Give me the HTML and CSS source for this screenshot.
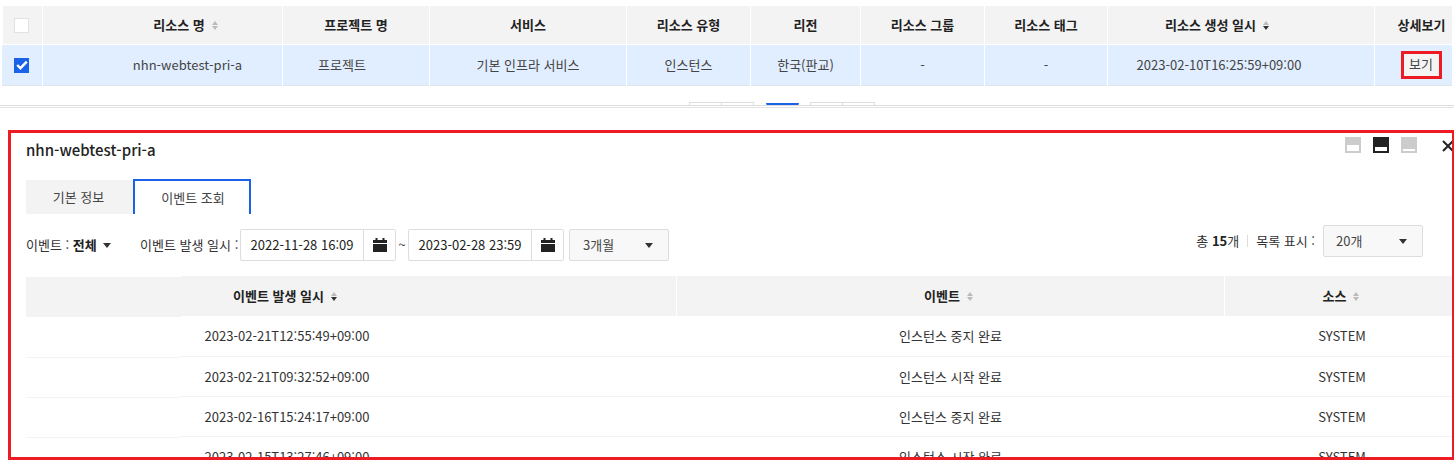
FILE: index.html
```html
<!DOCTYPE html>
<html lang="ko">
<head>
<meta charset="utf-8">
<title>리소스</title>
<link rel="stylesheet" href="styles.css">
</head>
<body>
<section class="resources">
  <div class="res-row res-head">
    <div class="cell check-cell"><span class="check"></span></div>
    <div class="cell shift-name">리소스 명<span class="sort"><i class="up"></i><i class="down"></i></span></div>
    <div class="cell">프로젝트 명</div>
    <div class="cell">서비스</div>
    <div class="cell">리소스 유형</div>
    <div class="cell">리전</div>
    <div class="cell">리소스 그룹</div>
    <div class="cell">리소스 태그</div>
    <div class="cell shift-date">리소스 생성 일시<span class="sort active"><i class="up"></i><i class="down"></i></span></div>
    <div class="cell shift-detail">상세보기</div>
  </div>
  <div class="res-row res-body">
    <div class="cell check-cell"><span class="check on"><svg width="12" height="10" viewBox="0 0 12 10"><path d="M1.2 5 4.4 8.2 10.8 1.6" fill="none" stroke="#fff" stroke-width="2.4"/></svg></span></div>
    <div class="cell shift-name">nhn-webtest-pri-a</div>
    <div class="cell shift-project">프로젝트</div>
    <div class="cell">기본 인프라 서비스</div>
    <div class="cell">인스턴스</div>
    <div class="cell">한국(판교)</div>
    <div class="cell">-</div>
    <div class="cell">-</div>
    <div class="cell shift-date">2023-02-10T16:25:59+09:00</div>
    <div class="cell shift-detail"><button class="view">보기</button></div>
  </div>
</section>

<div class="pager">
  <span class="page"></span><span class="page"></span>
  <span class="page current"></span>
  <span class="page"></span><span class="page"></span>
</div>
<div class="divider"></div>

<section class="panel">
  <header class="panel-head">
    <h1 class="panel-title">nhn-webtest-pri-a</h1>
    <div class="panel-tools">
      <svg width="16" height="16" viewBox="0 0 16 16"><rect width="16" height="16" fill="#ccc"/><rect x="2" y="8" width="12" height="6" fill="#fff"/></svg>
      <svg width="16" height="16" viewBox="0 0 16 16"><rect width="16" height="16" fill="#222"/><rect x="2" y="10" width="12" height="4" fill="#fff"/></svg>
      <svg width="16" height="16" viewBox="0 0 16 16"><rect width="16" height="16" fill="#ccc"/><rect x="2" y="12" width="12" height="2" fill="#fff"/></svg>
      <svg class="close" width="12" height="12" viewBox="0 0 12 12"><path d="M1 1 11 11M11 1 1 11" stroke="#222" stroke-width="2" fill="none"/></svg>
    </div>
  </header>

  <nav class="tabs">
    <span class="tab">기본 정보</span>
    <span class="tab selected">이벤트 조회</span>
  </nav>

  <div class="filters">
    <div class="filters-left">
      <span class="event-filter">이벤트 : <b>전체</b><i class="caret"></i></span>
      <span class="date-label">이벤트 발생 일시 :</span>
      <div class="date"><span class="date-text">2022-11-28 16:09</span><span class="date-btn"><svg width="14" height="14" viewBox="0 0 14 14"><path fill="#222" d="M0 2h2.500V0h2v2h5V0h2v2H14v3H0zM0 6h14v8H0z"/></svg></span></div>
      <span class="tilde">~</span>
      <div class="date"><span class="date-text">2023-02-28 23:59</span><span class="date-btn"><svg width="14" height="14" viewBox="0 0 14 14"><path fill="#222" d="M0 2h2.500V0h2v2h5V0h2v2H14v3H0zM0 6h14v8H0z"/></svg></span></div>
      <div class="select">3개월<i class="caret"></i></div>
    </div>
    <div class="filters-right">
      <span>총 <b>15</b>개</span>
      <span class="vr"></span>
      <span class="list-label">목록 표시 :</span>
      <div class="select">20개<i class="caret"></i></div>
    </div>
  </div>

  <div class="events">
    <div class="frozen">
      <div class="frozen-head"></div>
      <div class="frozen-row"></div>
      <div class="frozen-row"></div>
      <div class="frozen-row"></div>
      <div class="frozen-row"></div>
    </div>
    <div class="event-table">
      <div class="ev-row ev-head">
        <div class="cell ev-time">이벤트 발생 일시<span class="sort active"><i class="up"></i><i class="down"></i></span></div>
        <div class="cell ev-name">이벤트<span class="sort"><i class="up"></i><i class="down"></i></span></div>
        <div class="cell ev-source">소스<span class="sort"><i class="up"></i><i class="down"></i></span></div>
      </div>
      <div class="ev-row"><div class="cell ev-time">2023-02-21T12:55:49+09:00</div><div class="cell">인스턴스 중지 완료</div><div class="cell ev-source">SYSTEM</div></div>
      <div class="ev-row"><div class="cell ev-time">2023-02-21T09:32:52+09:00</div><div class="cell">인스턴스 시작 완료</div><div class="cell ev-source">SYSTEM</div></div>
      <div class="ev-row"><div class="cell ev-time">2023-02-16T15:24:17+09:00</div><div class="cell">인스턴스 중지 완료</div><div class="cell ev-source">SYSTEM</div></div>
      <div class="ev-row"><div class="cell ev-time">2023-02-15T13:27:46+09:00</div><div class="cell">인스턴스 시작 완료</div><div class="cell ev-source">SYSTEM</div></div>
    </div>
  </div>
</section>
</body>
</html>
```
FILE: styles.css
```css
* { box-sizing: border-box; }
html, body { margin: 0; height: 460px; overflow: hidden; background: #fff; }
body {
  font-family: "Noto Sans CJK KR", "Noto Sans", sans-serif;
  font-size: 13px;
  color: #333;
  line-height: 18px;
}
i { display: block; font-style: normal; }
b { font-weight: 700; color: #222; }

.resources { padding: 6px 0 0 3px; }
.res-row {
  display: grid;
  grid-template-columns: 39px 239px 146px 196px 123px 109px 123px 122px 266px 77px;
  column-gap: 1px;
}
.cell { display: flex; align-items: center; justify-content: center; min-width: 0; }
.res-head { height: 38px; margin-bottom: 1px; }
.res-head .cell { background: #f3f3f3; font-weight: 700; color: #222; }
.res-body { margin-left: -1px; grid-template-columns: 40px 239px 146px 196px 123px 109px 123px 122px 266px 77px; }
.res-body .cell { height: 41px; background: #e1eeff; border-bottom: 1px solid #dfe4ea; color: #444; }
.res-head .check-cell { padding-right: 2px; }
.res-body .check-cell { padding-right: 1px; }
.shift-name { padding-left: 50px; }
.res-head .shift-name { padding-left: 46px; }
.shift-project { padding-right: 28px; }
.shift-date { padding-right: 44px; }
.res-head .shift-date { padding-right: 48px; }
.shift-detail { padding-left: 16px; }

.check { display: block; width: 15px; height: 15px; background: #fff; border: 1px solid #e2e2e2; }
.check.on { background: #1a62e8; border-color: #1a62e8; display: flex; align-items: center; justify-content: center; }
.view {
  width: 41px; height: 28px; padding: 0 0 2px; margin-left: -1px;
  font: inherit; color: #444;
  background: #f4f4f4;
  border: 3px solid #ed1c24;
}

.sort { display: inline-flex; flex-direction: column; gap: 1px; margin-left: 7px; }
.up, .down { width: 0; height: 0; border-left: 3px solid transparent; border-right: 3px solid transparent; }
.up { border-bottom: 4px solid #bbb; }
.down { border-top: 4px solid #bbb; }
.sort.active .down { border-top-color: #333; }

.pager { display: flex; height: 21px; justify-content: center; padding: 16px 0 0 108px; overflow: hidden; }
.page { width: 33px; height: 10px; border: 1px solid #ddd; margin-right: -1px; flex: none; }
.page:nth-child(2) { margin-right: 12px; }
.page.current { border-color: #ddd; border-top: 3px solid #1a62e8; margin-right: 11px; margin-top: 1px; }
.divider { height: 3px; border-top: 1px solid #ddd; border-bottom: 1px solid #e4e4e4; margin-top: -2px; background: #fff; position: relative; }

.panel {
  margin: 22px 0 0 8px;
  height: 330px;
  border: 3px solid #ed1c24;
  border-right-width: 2px;
  padding-left: 15px;
  overflow: hidden;
}
.panel-head { display: flex; justify-content: space-between; height: 46px; padding-top: 4px; }
.panel-title { margin: 1px 0 0; font-size: 15px; line-height: 24px; font-weight: 500; color: #222; }
.panel-tools { display: flex; gap: 12px; height: 16px; }
.close { margin: 3px -2px 0 13px; flex: none; }

.tabs { display: flex; height: 35px; align-items: flex-end; }
.tab { width: 107px; height: 34px; padding-right: 2px; background: #f3f3f3; display: flex; align-items: center; justify-content: center; color: #444; }
.tab.selected { width: 118px; height: 35px; padding: 0 0 0 2px; background: #fff; border: 2px solid #1a62e8; border-bottom: 0; }

.filters { display: flex; justify-content: space-between; margin-top: 11px; height: 51px; }
.filters-left { display: flex; align-items: center; height: 32px; margin-top: 4px; }
.filters-right { display: flex; align-items: center; height: 32px; margin-right: 29px; }
.filters-right .select { padding-left: 12px; }
.event-filter { display: flex; align-items: center; white-space: pre; width: 114px; }
.event-filter .caret { margin-left: 6px; }
.date-label { width: 100px; white-space: nowrap; }
.date { display: flex; height: 32px; background: #fff; border: 1px solid #ddd; border-radius: 2px; width: 156px; }
.date-text { width: 123px; text-align: center; font-size: 13px; line-height: 29px; color: #222; border-right: 1px solid #ddd; }
.date-btn { flex: 1; display: flex; align-items: center; justify-content: center; }
.tilde { width: 12px; text-align: center; color: #333; }
.select {
  display: flex; align-items: center; justify-content: space-between;
  width: 100px; height: 32px; padding: 0 15px 0 13px;
  background: #f8f8f8; border: 1px solid #ddd; border-radius: 2px; color: #444;
}
.filters-left .select { margin-left: 5px; }
.caret { width: 0; height: 0; border-left: 4px solid transparent; border-right: 4px solid transparent; border-top: 5px solid #333; }
.vr { width: 1px; height: 12px; background: #ddd; margin: 0 8px; }
.list-label { margin-right: 8px; }

.events { display: flex; }
.frozen { width: 155px; flex: none; padding-top: 1px; }
.frozen-head { height: 40px; background: #f3f3f3; }
.frozen-row { height: 40px; border-bottom: 1px solid #f3f3f3; }
.frozen-row:nth-child(2) { height: 41px; }
.event-table { flex: 1; min-width: 0; }
.ev-row { display: grid; grid-template-columns: 495px 547px 1fr; column-gap: 1px; height: 40px; border-bottom: 1px solid #f3f3f3; }
.ev-row:nth-child(2) { height: 41px; }
.ev-head { background: #f3f3f3; border: 0; }
.ev-head .cell { font-weight: 700; color: #222; box-shadow: 1px 0 0 #fff; }
.ev-head .cell:last-child { box-shadow: none; }
.ev-time { padding-right: 283px; }
.ev-head .ev-time { padding-right: 287px; }
.ev-head .ev-name { padding-right: 4px; }
.ev-source { padding-left: 7px; }
.ev-head .ev-source { padding-left: 5px; }
```
